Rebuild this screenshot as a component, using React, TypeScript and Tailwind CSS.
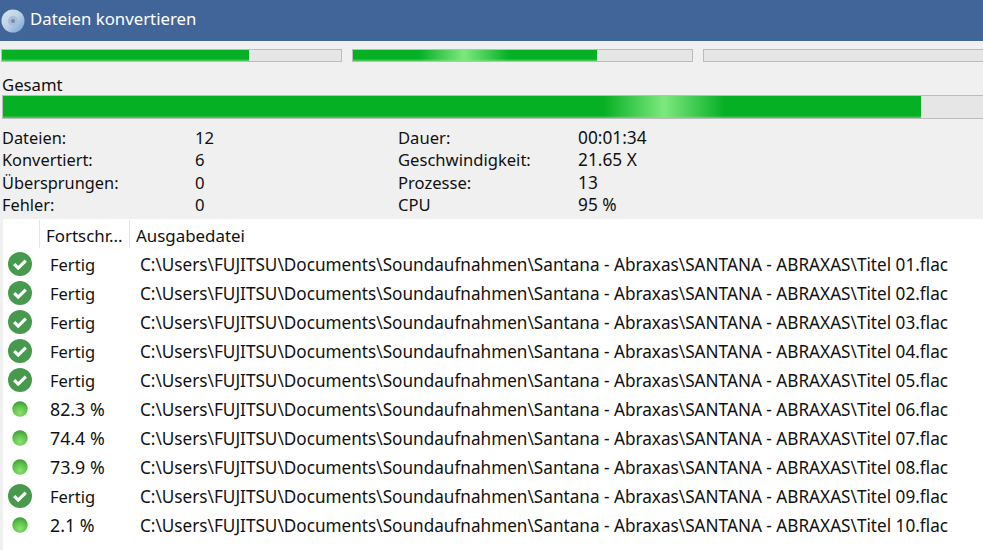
const font = { fontFamily: '"Noto Sans", "Open Sans", sans-serif' };

function Disc() {
  return (
    <svg width="24" height="24" viewBox="0 0 24 24" className="shrink-0">
      <defs>
        <linearGradient id="d" x1="0" y1="0" x2="1" y2="1">
          <stop offset="0" stopColor="#dbe6f2" />
          <stop offset="0.5" stopColor="#bcd0e6" />
          <stop offset="1" stopColor="#6e9fd6" />
        </linearGradient>
      </defs>
      <circle cx="12" cy="12" r="11.5" fill="url(#d)" />
      <circle cx="12" cy="12" r="5" fill="#a9bed6" />
      <circle cx="12" cy="12" r="2" fill="#6c8db3" />
    </svg>
  );
}

function Check() {
  return (
    <svg width="24" height="24" viewBox="0 0 24 24">
      <circle cx="12" cy="12" r="12" fill="#479a4d" />
      <path d="M6.2 12.2l4 3.9 7.6-7.4" fill="none" stroke="#fff" strokeWidth="3.2" />
    </svg>
  );
}

function Dot() {
  return (
    <svg width="16" height="16" viewBox="0 0 16 16">
      <defs>
        <radialGradient id="g" cx="0.5" cy="0.75" r="0.75">
          <stop offset="0" stopColor="#8ee36f" />
          <stop offset="0.6" stopColor="#5cc24a" />
          <stop offset="1" stopColor="#3f9a3c" />
        </radialGradient>
      </defs>
      <circle cx="8" cy="8" r="7.7" fill="url(#g)" />
    </svg>
  );
}

function Bar({
  fill,
  glowLeft,
  glowWidth,
  height,
  className,
}: {
  fill: number;
  glowLeft?: number;
  glowWidth?: number;
  height: string;
  className: string;
}) {
  return (
    <div className={`${height} ${className} shrink-0 border border-[#bcbcbc] bg-[#e6e6e6] overflow-hidden`}>
      {fill > 0 && (
        <div className="relative h-full bg-[#06b025] overflow-hidden" style={{ width: fill }}>
          <div className="absolute left-0 right-0 bottom-0 h-[2px] bg-gradient-to-b from-[#06b025] to-[#58cc6e]" />
          {glowLeft !== undefined && (
            <div
              className="absolute top-0 bottom-0 bg-gradient-to-r from-transparent via-[#7ee87f] to-transparent"
              style={{ left: glowLeft, width: glowWidth }}
            />
          )}
        </div>
      )}
    </div>
  );
}

const stats = [
  ['Dateien:', '12', 'Dauer:', '00:01:34'],
  ['Konvertiert:', '6', 'Geschwindigkeit:', '21.65 X'],
  ['Übersprungen:', '0', 'Prozesse:', '13'],
  ['Fehler:', '0', 'CPU', '95 %'],
];

const rows: [string, boolean, string][] = [
  ['Fertig', true, '01'],
  ['Fertig', true, '02'],
  ['Fertig', true, '03'],
  ['Fertig', true, '04'],
  ['Fertig', true, '05'],
  ['82.3 %', false, '06'],
  ['74.4 %', false, '07'],
  ['73.9 %', false, '08'],
  ['Fertig', true, '09'],
  ['2.1 %', false, '10'],
];

export default function App() {
  return (
    <div className="w-[983px] h-[550px] overflow-hidden bg-[#f0f0f0] text-[#111] text-[16.7px]" style={font}>
      <div className="h-[41px] bg-[#426599] flex items-center pl-[1px] gap-[5px] text-white">
        <Disc />
        <span className="text-[16.8px] leading-none pb-[3px]">Dateien konvertieren</span>
      </div>

      <div className="flex gap-[10px] pl-[1px] mt-[8px]">
        <Bar height="h-[13px]" className="w-[341px]" fill={247} />
        <Bar height="h-[13px]" className="w-[341px]" fill={244} glowLeft={66} glowWidth={90} />
        <Bar height="h-[13px]" className="w-[300px]" fill={0} />
      </div>

      <div className="pl-[2px] mt-[13px] leading-[20px] h-[20px]">Gesamt</div>
      <Bar height="h-[24px]" className="ml-[2px] w-[990px]" fill={918} glowLeft={601} glowWidth={120} />

      <div className="grid grid-cols-[193px_203px_180px_1fr] pl-[2px] mt-[8px] auto-rows-[22.4px] leading-[22.4px]">
        {stats.map(([a, b, c, d]) => (
          <div key={a} className="contents">
            <div className="text-[16.35px]">{a}</div>
            <div>{b}</div>
            <div className="text-[16.6px]">{c}</div>
            <div className="text-[17.3px]">{d}</div>
          </div>
        ))}
      </div>

      <div className="bg-white ml-[3px] mt-[2px] h-[333px]">
        <div className="flex h-[31px] items-start text-[16.9px]">
          <div className="mt-[1px] w-[37px] h-[28px] border-r border-[#e5e5e5]" />
          <div className="mt-[1px] w-[90px] h-[28px] border-r border-[#e5e5e5] pl-[6px] leading-[32px]">Fortschr...</div>
          <div className="mt-[1px] pl-[6px] leading-[32px]">Ausgabedatei</div>
        </div>
        {rows.map(([st, done, n]) => (
          <div key={n} className="flex h-[29px] items-center leading-none">
            <div className="w-[34px] flex justify-center shrink-0">{done ? <Check /> : <Dot />}</div>
            <div className={`w-[90px] pl-[13px] pt-[2px] shrink-0 ${done ? 'text-[16.5px]' : 'text-[17.8px]'}`}>{st}</div>
            <div className="pl-[13px] pt-[2px] whitespace-nowrap text-[17.17px]">
              {`C:\\Users\\FUJITSU\\Documents\\Soundaufnahmen\\Santana - Abraxas\\SANTANA - ABRAXAS\\Titel ${n}.flac`}
            </div>
          </div>
        ))}
      </div>
    </div>
  );
}
